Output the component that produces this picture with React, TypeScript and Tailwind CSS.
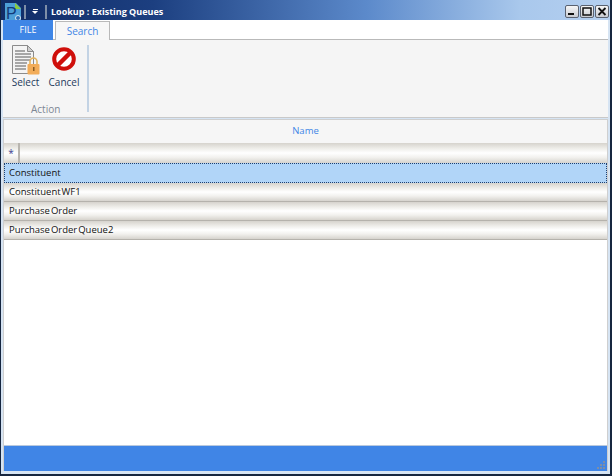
import React from "react";

const font = { fontFamily: '"Open Sans", "Noto Sans", sans-serif' };

const rowGradient =
  "bg-[linear-gradient(to_bottom,#d6d3cd_0%,#efeeea_28%,#ffffff_50%,#f2f1ee_72%,#d6d3cd_100%)]";

const AppIcon = () => (
  <svg width="18" height="18" viewBox="0 0 18 18" className="shrink-0">
    <path d="M1 0h11l5 5v13H1z" fill="#4d9fd8" />
    <path d="M11 0l6 6h-6z" fill="#8ccb3f" />
    <text x="2" y="16" fontSize="16" fontFamily="Liberation Sans" fill="#123a78">
      P
    </text>
    <circle cx="14" cy="15" r="2.500" fill="#2f6fb5" stroke="#d7e6f5" strokeWidth="1" />
  </svg>
);

const SelectIcon = () => (
  <svg width="28" height="30" viewBox="0 0 28 30">
    <path d="M0.500 0.500h15l6 6v22h-21z" fill="#f4f4f4" stroke="#8b8b8b" />
    <path d="M15.500 0.500v6h6z" fill="#cfcfcf" stroke="#8b8b8b" />
    <path
      d="M3 6h10M3 9h16M3 12h16M3 15h16M3 18h12M3 21h11M3 24h11"
      stroke="#8d8d8d"
      strokeWidth="1.600"
    />
    <path d="M18 19v-2.500a3.500 3.500 0 0 1 7 0V19" fill="none" stroke="#e3b45f" strokeWidth="1.600" />
    <rect x="15.500" y="19" width="12" height="10.500" rx="1" fill="#f2ac58" />
    <rect x="21" y="22" width="1.500" height="4" fill="#8a5a20" />
  </svg>
);

const CancelIcon = () => (
  <svg width="24" height="24" viewBox="0 0 24 24">
    <circle cx="12" cy="12" r="9.800" fill="#fff" stroke="#cf0f0b" strokeWidth="4" />
    <path d="M5.500 18.500L18.500 5.500" stroke="#cf0f0b" strokeWidth="4.500" />
  </svg>
);

const WinButton = ({ children }: { children: React.ReactNode }) => (
  <div className="w-[14px] h-[13px] flex items-center justify-center rounded-[2px] border border-[#5a6270] bg-[linear-gradient(to_bottom,#f6f6f6,#c9ccd2)]">
    <svg width="10" height="9" viewBox="0 0 10 9">
      {children}
    </svg>
  </div>
);

const Row = ({ children }: { children: React.ReactNode }) => (
  <div
    className={`h-[19px] shrink-0 flex items-center pl-[5px] text-[9.500px] [word-spacing:-1.500px] text-[#111111] border-b border-[#b5b2ac] ${rowGradient}`}
  >
    {children}
  </div>
);

export default function App() {
  return (
    <div
      style={font}
      className="w-[612px] h-[476px] flex flex-col overflow-hidden bg-[#d6e4f3] border-l border-r-2 border-b-2 border-[#16263f]"
    >
      {/* title bar */}
      <div className="h-[20px] shrink-0 -ml-px -mr-[2px] pt-[3px] flex items-center bg-[linear-gradient(to_right,#112c66_0%,#1c3f80_25%,#5c8acb_60%,#a9c8ec_85%,#b5d0f0_100%)]">
        <div className="ml-[4px] flex">
          <AppIcon />
        </div>
        <div className="ml-[2px] w-[2px] h-[14px] bg-[#7f8fa8]" />
        <div className="ml-[6px] flex flex-col items-center gap-[1px]">
          <div className="w-[5px] h-[1px] bg-white" />
          <div className="w-0 h-0 border-x-[3px] border-t-[3px] border-x-transparent border-t-white" />
        </div>
        <div className="ml-[7px] w-[2px] h-[14px] bg-[#7f8fa8]" />
        <span className="ml-[4px] text-[9px] font-bold text-white whitespace-nowrap">
          Lookup : Existing Queues
        </span>
        <div className="ml-auto mr-[3px] flex gap-[1px]">
          <WinButton>
            <path d="M1 7h6" stroke="#111" strokeWidth="2" />
          </WinButton>
          <WinButton>
            <rect x="1" y="1" width="8" height="7" fill="none" stroke="#111" strokeWidth="1.500" />
          </WinButton>
          <WinButton>
            <path d="M1.500 1l7 7M8.500 1l-7 7" stroke="#111" strokeWidth="1.800" />
          </WinButton>
        </div>
      </div>

      <div className="flex-1 flex flex-col min-h-0 ml-[2px] mr-[2px] mb-[3px]">
        {/* tabs */}
        <div className="h-[20px] shrink-0 flex bg-white items-end border-b border-[#b9b9b9]">
          <div className="w-[50px] h-[20px] -mb-px flex items-center justify-center bg-[#3f86e6] text-[9px] text-white">
            FILE
          </div>
          <div className="ml-[2px] w-[55px] h-[19px] -mb-px flex items-center justify-center bg-[#f7f7f7] border border-b-0 border-[#b9b9b9] text-[10px] text-[#3f86e6]">
            Search
          </div>
        </div>

        {/* ribbon */}
        <div className="h-[78px] shrink-0 flex bg-[#f5f5f5] border-b border-[#c9c9c9]">
          <div className="w-[84px] flex flex-col">
            <div className="flex mt-[5px] ml-[9px] gap-[10px]">
              <div className="flex flex-col items-center w-[27px]">
                <SelectIcon />
                <span className="text-[10px] leading-[12px] text-[#1e3a5c] mt-[1px]">Select</span>
              </div>
              <div className="flex flex-col items-center w-[30px]">
                <div className="h-[30px] pt-[2px]">
                  <CancelIcon />
                </div>
                <span className="text-[10px] leading-[12px] text-[#1e3a5c] mt-[1px]">Cancel</span>
              </div>
            </div>
            <span className="mt-[15px] ml-[28px] text-[10px] leading-[12px] text-[#7d8794]">Action</span>
          </div>
          <div className="w-[2px] h-[67px] mt-[5px] bg-[#c3d3e4]" />
        </div>

        {/* grid */}
        <div className="flex-1 flex flex-col min-h-0 bg-white mt-[1px] border-l border-r border-t border-[#cfcfcf]">
          <div className="h-[23px] shrink-0 flex items-center justify-center bg-[#f6f6f6] text-[9.500px] text-[#3f86e6]">
            Name
          </div>
          <div className={`h-[20px] shrink-0 flex ${rowGradient}`}>
            <div className="w-[16px] flex items-center justify-center text-[10px] text-[#3b3b8f] border-r-2 border-[#b8b5af]">
              *
            </div>
          </div>
          <div className="h-[20px] shrink-0 flex items-center pl-[4px] text-[9.500px] text-[#111111] bg-[#b1d5f8] border border-dotted border-[#20406f]">
            Constituent
          </div>
          <Row>Constituent WF1</Row>
          <Row>Purchase Order</Row>
          <Row>Purchase Order Queue2</Row>
          <div className="flex-1" />
          <div className="h-[26px] shrink-0 flex items-end justify-end bg-[#4085e6] border-t border-[#b9c9de]">
            <svg width="9" height="9" viewBox="0 0 9 9" className="mb-[1px] mr-[1px]" fill="#7d8ea6">
              <rect x="6" y="0" width="2" height="2" />
              <rect x="3" y="3" width="2" height="2" />
              <rect x="6" y="3" width="2" height="2" />
              <rect x="0" y="6" width="2" height="2" />
              <rect x="3" y="6" width="2" height="2" />
              <rect x="6" y="6" width="2" height="2" />
            </svg>
          </div>
        </div>
      </div>
    </div>
  );
}
